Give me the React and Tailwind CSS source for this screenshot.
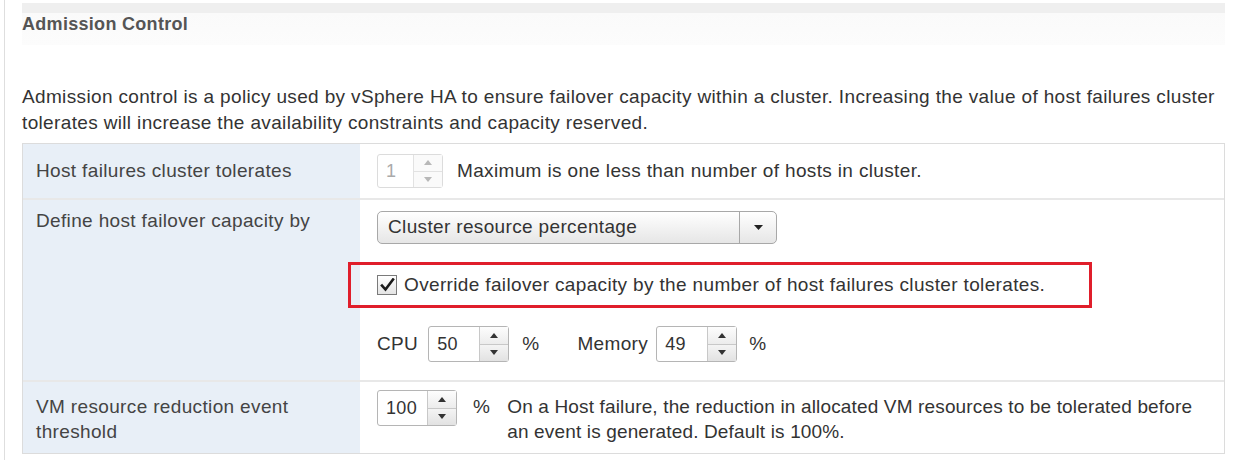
import React from 'react';

const Tri = ({ up, disabled }) => (
  <svg width="8" height="5" viewBox="0 0 8 5" className="block">
    <path d={up ? 'M0 5 L4 0 L8 5 Z' : 'M0 0 L8 0 L4 5 Z'} fill={disabled ? '#b8b8b8' : '#333'} />
  </svg>
);

function Spinner({ value, inputWidth, height = 36, disabled = false }) {
  return (
    <div
      className={`flex shrink-0 rounded-[3px] border bg-white ${disabled ? 'border-[#dcdcdc]' : 'border-[#b5b5b5]'}`}
      style={{ height }}
    >
      <div
        className={`flex items-center pl-[8px] text-[18px] ${disabled ? 'text-[#aaa]' : 'text-[#333]'}`}
        style={{ width: inputWidth }}
      >
        {value}
      </div>
      <div className={`flex w-[29px] flex-col border-l ${disabled ? 'border-[#e2e2e2]' : 'border-[#c8c8c8]'}`}>
        <div className={`flex flex-1 items-center justify-center border-b ${disabled ? 'border-[#e2e2e2] bg-[#fafafa]' : 'border-[#c8c8c8] bg-gradient-to-b from-[#fdfdfd] to-[#ececec]'}`}>
          <Tri up disabled={disabled} />
        </div>
        <div className={`flex flex-1 items-center justify-center ${disabled ? 'bg-[#fafafa]' : 'bg-gradient-to-b from-[#f4f4f4] to-[#e2e2e2]'}`}>
          <Tri disabled={disabled} />
        </div>
      </div>
    </div>
  );
}

export default function App() {
  return (
    <div className="h-[460px] bg-white font-['Liberation_Sans',Arial,sans-serif] tracking-[0.35px] text-[#333]">
      <div className="ml-[4px] h-full border-l border-[#dedede] pl-[17px] pr-[9px] pt-[3px]">
        {/* section header */}
        <div className="h-[42px] bg-[linear-gradient(to_bottom,#efefef_0px,#efefef_10px,#fafafa_10px,#fcfcfc_100%)]">
          <div className="pt-[9px] text-[18px] font-bold leading-[24px] tracking-[0.3px] text-[#555]">Admission Control</div>
        </div>

        <p className="mt-[39px] text-[19px] leading-[26px] text-[#333]">
          Admission control is a policy used by vSphere HA to ensure failover capacity within a cluster. Increasing the value of host failures cluster tolerates will increase the availability constraints and capacity reserved.
        </p>

        <div className="mt-[7px] border border-[#dcdcdc] text-[19px]">
          {/* row 1 */}
          <div className="flex h-[56px] border-b-2 border-[#e8e8e8]">
            <div className="flex w-[337px] shrink-0 items-center bg-[#e8eff7] pl-[13px] text-[#444]">
              Host failures cluster tolerates
            </div>
            <div className="flex items-center gap-[14px] pl-[17px]">
              <Spinner value="1" inputWidth={35} height={34} disabled />
              <span>Maximum is one less than number of hosts in cluster.</span>
            </div>
          </div>

          {/* row 2 */}
          <div className="flex border-b-2 border-[#e8e8e8]">
            <div className="w-[337px] shrink-0 bg-[#e8eff7] pl-[13px] pt-[10px] leading-[22px] text-[#444]">
              Define host failover capacity by
            </div>
            <div className="flex flex-col items-start pb-[18px] pl-[17px] pt-[11px]">
              <div className="flex h-[33px] w-[400px] rounded-[5px] border border-[#a8a8a8] bg-gradient-to-b from-white to-[#e6e6e6]">
                <div className="flex flex-1 items-center pl-[10px] text-[#333]">Cluster resource percentage</div>
                <div className="flex w-[37px] items-center justify-center border-l border-[#a8a8a8]">
                  <svg width="9" height="5" viewBox="0 0 9 5" className="block">
                    <path d="M0 0 L9 0 L4.5 5 Z" fill="#222" />
                  </svg>
                </div>
              </div>

              <div className="-ml-[29px] mt-[18px] flex h-[46px] w-[744px] items-center gap-[7px] border-[3px] border-[#e01e2b] pl-[26px]">
                <div className="flex h-[20px] w-[20px] shrink-0 items-center justify-center border border-[#7a7a7a] bg-gradient-to-b from-white to-[#e4e4e4]">
                  <svg width="15" height="14" viewBox="0 0 15 14" className="block">
                    <path d="M2 7.5 L5.5 11.5 L13 1.5" fill="none" stroke="#1a1a1a" strokeWidth="2.6" strokeLinecap="square" />
                  </svg>
                </div>
                <span className="whitespace-nowrap">Override failover capacity by the number of host failures cluster tolerates.</span>
              </div>

              <div className="mt-[18px] flex items-center">
                <span className="mr-[10px]">CPU</span>
                <Spinner value="50" inputWidth={50} />
                <span className="ml-[13px]">%</span>
                <span className="ml-[38px] mr-[8px]">Memory</span>
                <Spinner value="49" inputWidth={50} />
                <span className="ml-[12px]">%</span>
              </div>
            </div>
          </div>

          {/* row 3 */}
          <div className="flex h-[71px]">
            <div className="w-[337px] shrink-0 bg-[#e8eff7] pl-[13px] pr-[20px] pt-[12px] leading-[25px] text-[#444]">
              VM resource reduction event threshold
            </div>
            <div className="flex items-start pl-[17px] pr-[6px] pt-[8px]">
              <Spinner value="100" inputWidth={49} />
              <span className="ml-[16px] mt-[4px] leading-[25px]">%</span>
              <span className="ml-[17px] mt-[4px] leading-[25px] tracking-[0.15px]">
                On a Host failure, the reduction in allocated VM resources to be tolerated before an event is generated. Default is 100%.
              </span>
            </div>
          </div>
        </div>
      </div>
    </div>
  );
}
